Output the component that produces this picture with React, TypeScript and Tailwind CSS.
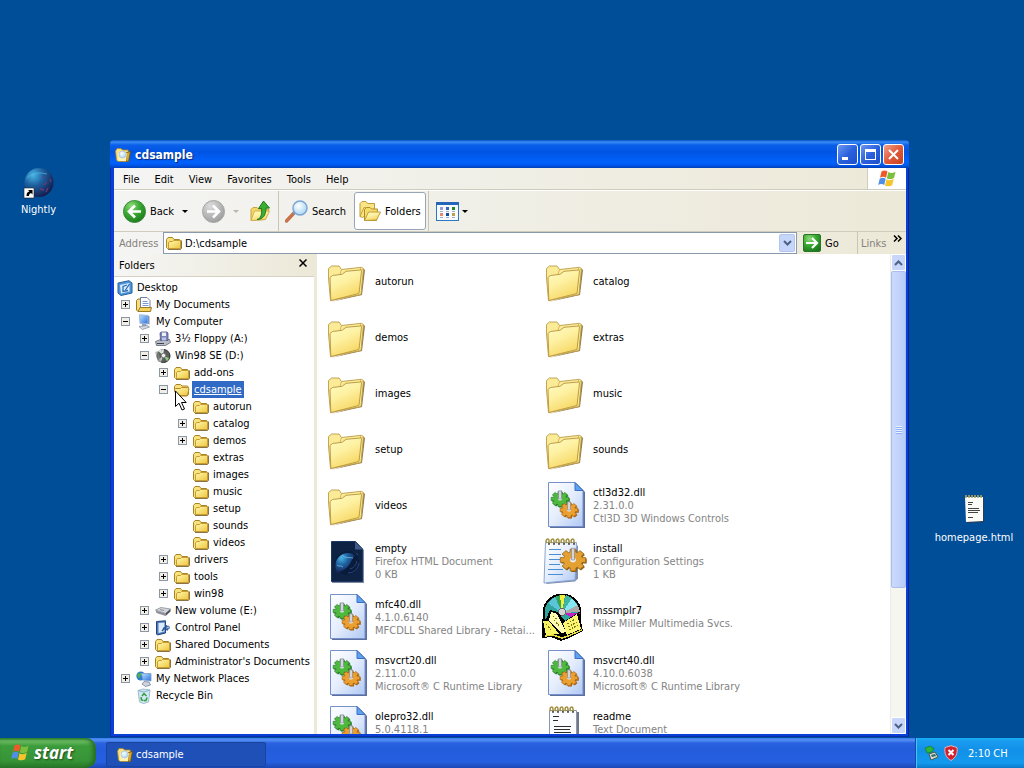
import type { ReactNode } from "react";
import clsx from "clsx";

type TreeNode = {
  label: string;
  icon: ReactNode;
  expandable?: boolean;
  selected?: boolean;
  children?: TreeNode[];
};

type FileItem = {
  name: string;
  icon: ReactNode;
  details?: string[];
};

// Gradients shared by every icon on the page
function Gradients() {
  return (
    <svg className="absolute w-0 h-0" aria-hidden="true">
      <defs>
        <linearGradient id="folder" x1="0" y1="0" x2="0.5" y2="1">
          <stop offset="0" stopColor="#fffcc4" />
          <stop offset="0.5" stopColor="#fdf0a0" />
          <stop offset="1" stopColor="#f7d764" />
        </linearGradient>
        <linearGradient id="folderSmall" x1="0" y1="0" x2="1" y2="1">
          <stop offset="0" stopColor="#fff9b0" />
          <stop offset="1" stopColor="#efc53c" />
        </linearGradient>
        <linearGradient id="page" x1="0" y1="0" x2="1" y2="1">
          <stop offset="0" stopColor="#ffffff" />
          <stop offset="0.5" stopColor="#e4edfd" />
          <stop offset="1" stopColor="#b0c8f4" />
        </linearGradient>
        <radialGradient id="green" cx="0.35" cy="0.25" r="0.8">
          <stop offset="0" stopColor="#8fdc7a" />
          <stop offset="0.5" stopColor="#3aa832" />
          <stop offset="1" stopColor="#1c7a1c" />
        </radialGradient>
        <radialGradient id="grey" cx="0.35" cy="0.25" r="0.8">
          <stop offset="0" stopColor="#dcdcdc" />
          <stop offset="1" stopColor="#9c9c9c" />
        </radialGradient>
        <radialGradient id="globe" cx="0.3" cy="0.25" r="0.8">
          <stop offset="0" stopColor="#48b4e4" />
          <stop offset="0.45" stopColor="#1d5f9e" />
          <stop offset="1" stopColor="#151c4c" />
        </radialGradient>
        <linearGradient id="screen" x1="0" y1="0" x2="1" y2="1">
          <stop offset="0" stopColor="#b8e4ff" />
          <stop offset="1" stopColor="#2a6fe0" />
        </linearGradient>
        <radialGradient id="lens" cx="0.4" cy="0.35" r="0.7">
          <stop offset="0" stopColor="#ffffff" />
          <stop offset="1" stopColor="#a5d3f5" />
        </radialGradient>
      </defs>
    </svg>
  );
}

function FolderSmall() {
  return (
    <svg className="size-4 shrink-0" viewBox="0 0 16 16">
      <path d="M2 14.500h12.500l1-1V5.500" fill="none" stroke="#8a7344" />
      <path
        d="M.5 12.500V4.500L2 2.500h4.500L8 4.500h5.500l1 1v8h-13z"
        fill="#f8e27c"
        stroke="#a98426"
      />
      <path
        d="M2.500 13.500V8l1-1.500h3l1-1h6.500l.5.500v7.500z"
        fill="url(#folderSmall)"
        stroke="#c79d33"
      />
    </svg>
  );
}

function FolderOpenSmall() {
  return (
    <svg className="size-4 shrink-0" viewBox="0 0 16 16">
      <path
        d="M.5 9V4.500L2 2.500h4.500L8 4h5.500l1 1.500v7L13 14H3z"
        fill="#f8e27c"
        stroke="#a98426"
      />
      <path
        d="M3 13.500L.6 7.500 1.500 6.500h5l1-1h6l1.500 1L13.500 13.500z"
        fill="url(#folderSmall)"
        stroke="#b48a2b"
      />
    </svg>
  );
}

// Folder with a magnifier, used by the title bar and the task button
function FolderSearch() {
  return (
    <svg className="size-4 shrink-0" viewBox="0 0 16 16">
      <path
        d="M.5 4L2 1.500h4L7.500 3h5.500l.5 1v10.500H3L1.500 13z"
        fill="#f8e184"
        stroke="#a9842c"
        strokeWidth=".8"
      />
      <path d="M11.500 5.500l4-1-2 10-2.500-.500z" fill="#d9a92f" stroke="#6b4c14" strokeWidth=".8" />
      <path d="M3 6h9l-1 8H3.500z" fill="#fff3b4" />
      <circle cx="7.500" cy="7.500" r="3.500" fill="url(#lens)" stroke="#a9c6de" strokeWidth=".8" />
    </svg>
  );
}

function FolderLarge() {
  return (
    <svg className="size-12 shrink-0" viewBox="0 0 48 48">
      <path d="M6.500 45l31.500-7 3-25-1.500-1.500L36 37z" fill="#8f7a48" />
      <path
        d="M4.500 21V11.500l3-2.500h7.500l2.500 3.500 20-2.200 2 1.200-2.500 26-30.500 6z"
        fill="#fbeb96"
        stroke="#bb9c48"
        strokeWidth=".9"
      />
      <path
        d="M17.500 12.500l-1.500 4.500M36.500 10.500v2.500M36.500 13l2.500-.500"
        fill="none"
        stroke="#c9ac56"
        strokeWidth=".8"
      />
      <path
        d="M6 20.500l2.500-2 9.500-1.200 4-3L36.500 13l1 1-2.500 22.500L6.800 43.500z"
        fill="url(#folder)"
        stroke="#b5943c"
        strokeWidth=".9"
      />
    </svg>
  );
}

// Closed outline of a cog with eight square teeth, centred on 0,0
function cogPath(radius: number) {
  const teeth = 8;
  const points: string[] = [];
  for (let i = 0; i < teeth; i++) {
    const angle = (i / teeth) * Math.PI * 2;
    [
      [-0.22, 1],
      [0.22, 1],
      [0.3, 0.74],
      [0.48, 0.74],
    ].forEach(([offset, reach]) => {
      const a = angle + offset;
      points.push(
        `${(Math.cos(a) * radius * reach).toFixed(1)} ${(Math.sin(a) * radius * reach * 0.86).toFixed(1)}`,
      );
    });
  }
  return `M${points.join("L")}z`;
}

type CogProps = { x: number; y: number; radius: number; fill: string; stroke: string };

function Cog({ x, y, radius, fill, stroke }: CogProps) {
  return (
    <g transform={`translate(${x} ${y})`}>
      <path d={cogPath(radius)} transform="translate(1 1)" fill={stroke} />
      <path d={cogPath(radius)} fill={fill} stroke={stroke} strokeWidth=".7" />
      <ellipse rx={radius * 0.22} ry={radius * 0.18} fill="#eef1f8" />
      <path
        d={`M-1.500 0V${-radius * 0.9}h3V0z`}
        fill="#d3d6de"
        stroke="#7e828e"
        strokeWidth=".6"
      />
    </g>
  );
}

function DllIcon() {
  return (
    <svg className="size-12 shrink-0" viewBox="0 0 48 48">
      <path d="M8 3h27l8 8v36H8z" fill="#5d6f9f" />
      <path d="M6.500 1.500h26.500l8 8V45.500h-34.500z" fill="url(#page)" stroke="#7590cc" />
      <path d="M33 1.500v8h8z" fill="#5da2ee" stroke="#3c6fc0" />
      <Cog x={18} y={18} radius={9} fill="#4fb83f" stroke="#2b7d28" />
      <Cog x={27} y={29} radius={9} fill="#eb9f2f" stroke="#a86612" />
    </svg>
  );
}

function HtmlFileIcon() {
  return (
    <svg className="size-12 shrink-0" viewBox="0 0 48 48">
      <path d="M8 5h24l8 8v33H8z" fill="#7f8aa0" />
      <path d="M7.500 4.500H31.500l7 7.500v32.500H7.500z" fill="#0e2344" stroke="#1b3763" />
      <path d="M31 4.500v8h8z" fill="#3f5a88" />
      <circle cx="23" cy="26" r="12" fill="#0b1b3c" />
      <path
        d="M13 36c-4-9 0-19 10-20 4-.5 7 1 8 3-3 2-3 5-6 9-3 4-7 6-12 8z"
        fill="url(#globe)"
      />
      <path d="M13 28c2 2 4 0 6 2M18 18c4 4 7 2 11 3" stroke="#7cd0f0" strokeWidth=".7" fill="none" />
      <path d="M24 36c6 0 10-4 11-10M26 32c4-1 6-4 7-8M32 16l2 2" stroke="#27467c" fill="none" />
    </svg>
  );
}

function Spiral({ count }: { count: number }) {
  return (
    <>
      {Array.from({ length: count }, (_, i) => (
        <g key={i} transform={`translate(${i * 5} 0)`}>
          <path d="M5 6c-3-3 2-6 2-2v3" fill="none" stroke="#a18f3e" strokeWidth="1.500" />
          <circle cx="7" cy="7" r=".9" fill="#3c3c3c" />
        </g>
      ))}
    </>
  );
}

function ConfigIcon() {
  return (
    <svg className="size-12 shrink-0" viewBox="0 0 48 48">
      <path d="M4 47l29-2.500 3-3V8z" fill="#7e8cae" />
      <path d="M3.500 5.500h31l-1.500 37.500-31 3z" fill="url(#page)" stroke="#8aa6d2" />
      <path
        d="M7 12.500h12M7 17.500h12M7 22.500h11M7 27.500h11M6 32.500h15M6 37.500h15"
        stroke="#4b8fcf"
      />
      <Spiral count={6} />
      <Cog x={31} y={23} radius={13} fill="#e4a030" stroke="#8f5f14" />
    </svg>
  );
}

function NotepadIcon() {
  return (
    <svg className="size-12 shrink-0" viewBox="0 0 48 48">
      <path d="M9 7h28v41H9z" fill="#6f7688" />
      <path d="M7.500 5.500h27v42h-27z" fill="#fbfcff" stroke="#8d97ac" />
      <path
        d="M11 11.500h6M11 15.500h5M12 21.500h17M12 24.500h16M12 27.500h17M12 34.500h8"
        stroke="#2b2b2b"
        strokeWidth="1.200"
      />
      <g transform="translate(4 0)">
        <Spiral count={5} />
      </g>
    </svg>
  );
}

// Pixel-art disc behind an open book
function SamplerIcon() {
  return (
    <svg className="size-12 shrink-0" viewBox="0 0 48 48" shapeRendering="crispEdges">
      <circle cx="20" cy="20" r="18.500" fill="#2fa59e" stroke="#000" strokeWidth="2" />
      <path d="M20 20L6 10l7-6z" fill="#5cc4d8" />
      <path d="M20 20L14 4l4-2z" fill="#37a54c" />
      <path d="M20 20L18 2h5z" fill="#f3f03a" />
      <path d="M20 20L24 2l6 3z" fill="#3fb5a2" />
      <path d="M20 20L30 5l6 8z" fill="#86e6f2" />
      <path d="M20 20l16-8 2 7z" fill="#a9a9a9" />
      <path d="M20 20l18 0-1 7z" fill="#c11fc6" />
      <circle cx="20" cy="19" r="3.500" fill="#d5d5d5" stroke="#666" />
      <path d="M0 26h4l4-9 8 2 7 9 14-9 4 19-14 7-8 3-10-4-9 1z" fill="#000" />
      <path d="M1 28l6 0 10 13-13 1z" fill="#f7f264" />
      <path d="M9 19l6 2 9 18-5 1L7 27z" fill="#fffdb0" />
      <path d="M21 30l14-9 4 15-14 6z" fill="#fbf672" />
      <path
        d="M25 31l8-5M26 34l9-5M27 37l9-5M11 23l5 4M12 27l6 7M4 31l5 6"
        stroke="#7a7714"
        strokeDasharray="2 1"
      />
      <path d="M3 43l8-1 9 3 6-2 14-6" fill="none" stroke="#e5dc3a" strokeWidth="1.500" />
    </svg>
  );
}

function WindowsFlag({ className }: { className: string }) {
  return (
    <svg className={className} viewBox="0 0 20 20">
      <path d="M4.500 2.500c2-1.300 4-1.300 6 0L9 8.700c-2-1.300-4-1.300-6 0z" fill="#ec5a2a" />
      <path d="M11.300 3c2 1.300 4.500 1.300 7.200-.300L17 9c-2.500 1.500-5 1.500-7.200.200z" fill="#7cbf3a" />
      <path d="M2.700 9.700c2-1.300 4-1.300 6 0l-1.500 6.200c-2-1.300-4-1.300-6 0z" fill="#4f8fe8" />
      <path d="M9.500 10.200c2 1.300 4.700 1.300 7.200-.200l-1.500 6.200c-2.500 1.500-5 1.500-7.200.200z" fill="#f8c42c" />
    </svg>
  );
}

function DesktopIcon() {
  return (
    <svg className="size-4 shrink-0" viewBox="0 0 16 16">
      <path d="M1 3L12 .700 15 3v10L4 15.500 1 13z" fill="#4f93d8" stroke="#24619f" />
      <path d="M3 5l9.500-2v8.500L4 13.500z" fill="#d9edff" />
      <path d="M10 5L6 6.500v5l5-1M8.500 10l4-6" fill="none" stroke="#2d6cb0" strokeWidth="1.300" />
    </svg>
  );
}

function DocumentsIcon() {
  return (
    <svg className="size-4 shrink-0" viewBox="0 0 16 16">
      <path d="M.5 13V3.500L2 2h3l1 1.500V14.500H2z" fill="#f7de7a" stroke="#9c7b26" />
      <path d="M4.500.500h6.500L14 3.500v9H4.500z" fill="#fdfdff" stroke="#6d7fa6" />
      <path d="M6.500 4.500h5M6.500 6.500h6M6.500 8.500h6" stroke="#7b9bd0" />
      <path d="M2 14.500L4 10.500h11.500l-1 4z" fill="#f3d25c" stroke="#9c7b26" />
    </svg>
  );
}

function ComputerIcon() {
  return (
    <svg className="size-4 shrink-0" viewBox="0 0 16 16">
      <path d="M3.500.800l8.500.700v8.500l-8-.800z" fill="url(#screen)" stroke="#9db4dc" />
      <path d="M12 1.500l1.500 1v8L12 10z" fill="#8093bd" />
      <path d="M6 9.500l4 .500v2H6z" fill="#9aa4bb" />
      <path d="M3 12.500l8-1 2.500 1.500-7 2.500z" fill="#d4d9e4" stroke="#7b8396" strokeWidth=".7" />
    </svg>
  );
}

function FloppyIcon() {
  return (
    <svg className="size-4 shrink-0" viewBox="0 0 16 16">
      <path d="M.5 10.500l5-2h9l1 3-5 3H1.500z" fill="#b9bcc6" stroke="#62656f" strokeWidth=".8" />
      <path d="M5 2l1.500-1H12l1 1v7.500H5.500z" fill="#7b86b4" stroke="#4d5684" strokeWidth=".8" />
      <path d="M7 1.500h4v3.500H7z" fill="#eef0f8" />
      <path d="M7 6.500h4v3H7z" fill="#b9c4e6" />
      <path d="M2 12.500h7" stroke="#3f434e" />
    </svg>
  );
}

function DiscIcon() {
  return (
    <svg className="size-4 shrink-0" viewBox="0 0 16 16">
      <ellipse cx="8.500" cy="8" rx="6.500" ry="6.500" fill="#5c605c" stroke="#2b2b2b" />
      <path d="M8 7L3 3l3-1.500z" fill="#d9ead9" />
      <path d="M9 8l5 2-2 3.500z" fill="#8fca86" />
      <path d="M8 8l-2 6-3-2z" fill="#c4c8cc" />
      <path d="M8 7L6 1.500l3-.3z" fill="#e8e8f4" />
      <circle cx="8.500" cy="7.500" r="2.200" fill="#f3f3f3" stroke="#777" />
      <path d="M0 4l3-1 3 10-3 1z" fill="#8d948f" opacity=".6" />
    </svg>
  );
}

function DriveIcon() {
  return (
    <svg className="size-4 shrink-0" viewBox="0 0 16 16">
      <path d="M.5 7L6 4.500l9.500 1.500-5 4.500z" fill="#d3d5da" stroke="#8b8e97" strokeWidth=".8" />
      <path d="M.5 7.500l10 3v2.500l-9-3z" fill="#8e9199" />
      <path d="M10.500 10.500l5-4.500v2.500l-5 4.500z" fill="#4d5057" />
      <path d="M5 6.500l4 1" stroke="#8e9199" />
    </svg>
  );
}

function ControlPanelIcon() {
  return (
    <svg className="size-4 shrink-0" viewBox="0 0 16 16">
      <path d="M1.500 1.500l9-.700v12.200l-8 2-1-1z" fill="#4b79b9" stroke="#21457c" />
      <path d="M3.500 3l6-.500v9l-6 1.500z" fill="#dcebfb" />
      <path d="M7 11l5-5.500M10 5l4 3.500M8 8l5 2" stroke="#2a5698" strokeWidth="1.400" />
      <circle cx="13" cy="7.500" r="1.500" fill="#8fb4e4" stroke="#21457c" strokeWidth=".6" />
    </svg>
  );
}

function NetworkIcon() {
  return (
    <svg className="size-4 shrink-0" viewBox="0 0 16 16">
      <circle cx="4.800" cy="5" r="4.500" fill="#2f7fd0" />
      <path d="M1 4c2-3 5-2 5-1s-2 1-2 3-2 1-3-2z" fill="#4fb04a" />
      <path d="M5.500 2.500h9.500v7.500l-8-1z" fill="url(#screen)" stroke="#7c9ccc" strokeWidth=".8" />
      <path d="M8 10.500l5 .500 1.500 3-5 1.500L6 13z" fill="#cdd3df" stroke="#7a8294" strokeWidth=".8" />
    </svg>
  );
}

function RecycleIcon() {
  return (
    <svg className="size-4 shrink-0" viewBox="0 0 16 16">
      <path d="M2 2.500l5-1.500 7 1-1.500 12-5 1.500-4-1.500z" fill="#d0e7f4" stroke="#8cb0c4" strokeWidth=".8" />
      <path d="M2 2.500l6 1.500 6-2" fill="none" stroke="#8cb0c4" />
      <path d="M6 8l2-2.500L10.500 8M11 9.500l-1 3H8M5 9l.500 3 2 .500" stroke="#2f9d3a" strokeWidth="1.500" fill="none" />
    </svg>
  );
}

const tree: TreeNode[] = [
  { label: "My Documents", icon: <DocumentsIcon />, expandable: true },
  {
    label: "My Computer",
    icon: <ComputerIcon />,
    expandable: true,
    children: [
      { label: "3½ Floppy (A:)", icon: <FloppyIcon />, expandable: true },
      {
        label: "Win98 SE (D:)",
        icon: <DiscIcon />,
        expandable: true,
        children: [
          { label: "add-ons", icon: <FolderSmall />, expandable: true },
          {
            label: "cdsample",
            icon: <FolderOpenSmall />,
            expandable: true,
            selected: true,
            children: [
              { label: "autorun", icon: <FolderSmall /> },
              { label: "catalog", icon: <FolderSmall />, expandable: true },
              { label: "demos", icon: <FolderSmall />, expandable: true },
              { label: "extras", icon: <FolderSmall /> },
              { label: "images", icon: <FolderSmall /> },
              { label: "music", icon: <FolderSmall /> },
              { label: "setup", icon: <FolderSmall /> },
              { label: "sounds", icon: <FolderSmall /> },
              { label: "videos", icon: <FolderSmall /> },
            ],
          },
          { label: "drivers", icon: <FolderSmall />, expandable: true },
          { label: "tools", icon: <FolderSmall />, expandable: true },
          { label: "win98", icon: <FolderSmall />, expandable: true },
        ],
      },
      { label: "New volume (E:)", icon: <DriveIcon />, expandable: true },
      { label: "Control Panel", icon: <ControlPanelIcon />, expandable: true },
      { label: "Shared Documents", icon: <FolderSmall />, expandable: true },
      { label: "Administrator's Documents", icon: <FolderSmall />, expandable: true },
    ],
  },
  { label: "My Network Places", icon: <NetworkIcon />, expandable: true },
  { label: "Recycle Bin", icon: <RecycleIcon /> },
];

const files: FileItem[] = [
  { name: "autorun", icon: <FolderLarge /> },
  { name: "catalog", icon: <FolderLarge /> },
  { name: "demos", icon: <FolderLarge /> },
  { name: "extras", icon: <FolderLarge /> },
  { name: "images", icon: <FolderLarge /> },
  { name: "music", icon: <FolderLarge /> },
  { name: "setup", icon: <FolderLarge /> },
  { name: "sounds", icon: <FolderLarge /> },
  { name: "videos", icon: <FolderLarge /> },
  { name: "ctl3d32.dll", icon: <DllIcon />, details: ["2.31.0.0", "Ctl3D 3D Windows Controls"] },
  { name: "empty", icon: <HtmlFileIcon />, details: ["Firefox HTML Document", "0 KB"] },
  { name: "install", icon: <ConfigIcon />, details: ["Configuration Settings", "1 KB"] },
  {
    name: "mfc40.dll",
    icon: <DllIcon />,
    details: ["4.1.0.6140", "MFCDLL Shared Library - Retai..."],
  },
  { name: "mssmplr7", icon: <SamplerIcon />, details: ["Mike Miller Multimedia Svcs."] },
  { name: "msvcrt20.dll", icon: <DllIcon />, details: ["2.11.0.0", "Microsoft® C Runtime Library"] },
  { name: "msvcrt40.dll", icon: <DllIcon />, details: ["4.10.0.6038", "Microsoft® C Runtime Library"] },
  { name: "olepro32.dll", icon: <DllIcon />, details: ["5.0.4118.1", ""] },
  { name: "readme", icon: <NotepadIcon />, details: ["Text Document", ""] },
];

const menus = ["File", "Edit", "View", "Favorites", "Tools", "Help"];

function TreeItem({ node }: { node: TreeNode }) {
  return (
    <li>
      <div className="flex items-center h-[17px]">
        {node.expandable ? (
          <button
            aria-label={`Toggle ${node.label}`}
            className="size-[9px] shrink-0 border border-[#8c97a4] bg-[#f0eee6] flex items-center justify-center"
          >
            <svg className="size-[7px]" viewBox="0 0 7 7" shapeRendering="crispEdges">
              <path d={node.children ? "M1 3.500h5" : "M1 3.500h5M3.500 1v5"} stroke="#000" />
            </svg>
          </button>
        ) : (
          <span className="w-[9px] shrink-0" />
        )}
        <span className="ml-1.5 mr-0.5 flex">{node.icon}</span>
        <a
          href="#"
          className={clsx(
            "px-0.5 leading-[17px] whitespace-nowrap",
            node.selected && "bg-[#316ac5] text-white underline",
          )}
        >
          {node.label}
        </a>
      </div>
      {node.children && (
        <ul className="pl-[19px]">
          {node.children.map((child) => (
            <TreeItem key={child.label} node={child} />
          ))}
        </ul>
      )}
    </li>
  );
}

function Chevron({ up }: { up?: boolean }) {
  return (
    <svg className="w-[9px] h-1.5" viewBox="0 0 9 6">
      <path
        d={up ? "M1 5l3.500-3.500L8 5" : "M1 1l3.500 3.500L8 1"}
        fill="none"
        stroke="#4d6185"
        strokeWidth="2"
      />
    </svg>
  );
}

function Caret({ className }: { className?: string }) {
  return (
    <svg className={clsx("w-1.5 h-[3px] shrink-0", className)} viewBox="0 0 6 3">
      <path d="M0 0h6L3 3z" fill="currentColor" />
    </svg>
  );
}

function Separator() {
  return <span className="w-px self-stretch bg-[#c9c6b5]" />;
}

function TitleBar() {
  const button =
    "size-[21px] rounded-[3px] border border-white flex items-center justify-center";
  return (
    <header className="h-7 shrink-0 flex items-center px-[5px] pt-px rounded-t-[4px] bg-[linear-gradient(#0b50c8_0px,#3a8df5_2px,#0a5fea_5px,#0054e3_12px,#0062fc_22px,#0058ee_25px,#0040b8_28px)]">
      <FolderSearch />
      <h1 className="ml-1 pt-px flex-1 text-white text-[12px] font-bold [text-shadow:1px_1px_1px_#0a2a7c]">
        cdsample
      </h1>
      <div className="flex gap-0.5">
        <button
          aria-label="Minimize"
          className={clsx(button, "bg-linear-to-br from-[#6c97f0] via-[#2b61dd] to-[#1d4ecb]")}
        >
          <svg className="size-[15px]" viewBox="0 0 15 15">
            <path d="M2 10h6v3H2z" fill="#fff" />
          </svg>
        </button>
        <button
          aria-label="Maximize"
          className={clsx(button, "bg-linear-to-br from-[#6c97f0] via-[#2b61dd] to-[#1d4ecb]")}
        >
          <svg className="size-[15px]" viewBox="0 0 15 15" shapeRendering="crispEdges">
            <path d="M2 2h11v11H2zM3 5v7h9V5z" fill="#fff" fillRule="evenodd" />
          </svg>
        </button>
        <button
          aria-label="Close"
          className={clsx(button, "bg-linear-to-br from-[#f0a088] via-[#e05a3a] to-[#c8401c]")}
        >
          <svg className="size-[15px]" viewBox="0 0 15 15">
            <path d="M3 3l9 9M12 3l-9 9" stroke="#fff" strokeWidth="2" />
          </svg>
        </button>
      </div>
    </header>
  );
}

function MenuBar() {
  return (
    <nav className="h-[22px] flex items-stretch border-b border-[#cfccbd]">
      <div className="flex-1 flex items-center gap-[15px] pl-[9px] pt-px">
        {menus.map((menu) => (
          <button key={menu}>{menu}</button>
        ))}
      </div>
      <div className="w-[39px] bg-white border-l border-[#cfccbd] flex items-center justify-center">
        <WindowsFlag className="size-5" />
      </div>
    </nav>
  );
}

function Toolbar() {
  return (
    <div className="h-[42px] flex items-center pl-[9px] border-t border-t-white border-b border-[#cfccbd]">
      <button className="flex items-center gap-1">
        <svg className="size-[23px]" viewBox="0 0 23 23">
          <circle cx="11.500" cy="11.500" r="11" fill="url(#green)" stroke="#3b8a36" />
          <path d="M18 11.500H7M12 5.500l-6 6 6 6" fill="none" stroke="#fff" strokeWidth="2.600" />
        </svg>
        Back
      </button>
      <button aria-label="Back history" className="ml-1.5 p-0.5">
        <Caret />
      </button>
      <button aria-label="Forward" className="ml-3">
        <svg className="size-[23px]" viewBox="0 0 23 23">
          <circle cx="11.500" cy="11.500" r="11" fill="url(#grey)" stroke="#a6a6a6" />
          <path d="M5 11.500h11M11 5.500l6 6-6 6" fill="none" stroke="#fff" strokeWidth="2.600" />
        </svg>
      </button>
      <button aria-label="Forward history" className="ml-1.5 p-0.5">
        <Caret className="text-[#b9b7ab]" />
      </button>
      <button aria-label="Up" className="ml-2 mr-[7px]">
        <svg className="size-[22px]" viewBox="0 0 22 22">
          <path d="M2 20.500V9.500l2-2h4l1.500 1.500h10.500l-4 10.500z" fill="#f3d760" stroke="#c4a544" />
          <path d="M2 20.500l3.500-9.500h15l-4 8.500z" fill="url(#folder)" stroke="#d0b050" />
          <path
            d="M8 19.500c4-1 5-5 4.500-11H9.500L14.500 1l6 7h-3.500c0 7-3 11.500-9 11.500z"
            fill="#3bad33"
            stroke="#1f7a1c"
          />
        </svg>
      </button>
      <Separator />
      <button className="flex items-center gap-1 pl-1.5 pr-2">
        <svg className="size-[23px]" viewBox="0 0 23 23">
          <path d="M1.500 21L9 13" stroke="#c9734a" strokeWidth="3.500" strokeLinecap="round" />
          <path d="M8 14l2-2" stroke="#7c93ad" strokeWidth="2.500" />
          <circle cx="15" cy="8" r="7" fill="url(#lens)" stroke="#7ba5d6" strokeWidth="1.500" />
        </svg>
        Search
      </button>
      <button
        aria-pressed="true"
        className="h-[38px] flex items-center gap-1 px-1 bg-white border border-[#98a5b8] rounded-[3px]"
      >
        <svg className="size-[22px]" viewBox="0 0 22 22">
          <path d="M1 16.500V3.500l2-2h4l1.500 2h7v5l-12 9z" fill="#f9e583" stroke="#c09c38" />
          <path d="M5.500 20.500V9.500l2-2h3.500l1.500 1.500h6l-1 11.500z" fill="#f6dc6a" stroke="#b08c28" />
          <path d="M5.500 20.500L9.500 12h12l-4 8z" fill="url(#folder)" stroke="#c09c38" />
          <path d="M1 16.500L5 7.500h3" fill="none" stroke="#c7a33c" />
        </svg>
        Folders
      </button>
      <span className="w-0.5" />
      <Separator />
      <button aria-label="Views" className="flex items-center gap-[3px] ml-[7px]">
        <svg className="w-[23px] h-[19px]" viewBox="0 0 23 19" shapeRendering="crispEdges">
          <rect x=".5" y=".5" width="22" height="18" fill="#f7fbff" stroke="#2a77c4" />
          <path d="M0 0h23v3H0z" fill="#2467b8" />
          <path d="M4 5h3v3H4z" fill="#9b9bd8" />
          <path d="M10 5h3v3h-3z" fill="#3a62c0" />
          <path d="M16 5h3v3h-3z" fill="#1d8a26" />
          <path d="M4 11h3v3H4z" fill="#e58a72" />
          <path d="M10 11h3v3h-3z" fill="#134d96" />
          <path d="M16 11h3v3h-3z" fill="#b5a548" />
          <path d="M4 9.500h3M10 9.500h3M16 9.500h3M4 15.500h3M10 15.500h3M16 15.500h3" stroke="#9fb0c8" />
        </svg>
        <Caret />
      </button>
    </div>
  );
}

function AddressBar() {
  return (
    <div className="h-[22px] flex items-center pl-[5px]">
      <label htmlFor="address" className="w-11 shrink-0 text-[#84827a]">
        Address
      </label>
      <div className="flex-1 h-[22px] flex items-center bg-white border border-[#8a9aac] pl-0.5">
        <FolderSmall />
        <input
          id="address"
          defaultValue={"D:\\cdsample"}
          className="flex-1 min-w-0 ml-[3px] h-full pt-px outline-none"
        />
        <button
          aria-label="Show addresses"
          className="w-4 h-[18px] mr-px rounded-[2px] bg-[#c6d6fb] border border-[#b3c5ef] flex items-center justify-center"
        >
          <Chevron />
        </button>
      </div>
      <button className="flex items-center gap-1 ml-1.5 w-[54px]">
        <svg className="size-[18px]" viewBox="0 0 18 18">
          <rect x=".5" y=".5" width="17" height="17" rx="1.500" fill="url(#green)" stroke="#27762a" />
          <path d="M3 9h10M9 4l5 5-5 5" fill="none" stroke="#fff" strokeWidth="2.200" />
        </svg>
        Go
      </button>
      <Separator />
      <span className="ml-[3px] w-8 text-[#84827a]">Links</span>
      <button aria-label="More links" className="w-[13px] self-start">
        <svg className="w-[9px] h-[7px] mt-[3px]" viewBox="0 0 9 7">
          <path d="M1 .500l3 3-3 3M5 .500l3 3-3 3" fill="none" stroke="#000" strokeWidth="1.500" />
        </svg>
      </button>
    </div>
  );
}

function FolderTree() {
  return (
    <aside className="w-[203px] shrink-0 flex flex-col bg-[#ece9d8] pr-[3px]">
      <div className="h-[23px] shrink-0 flex items-center justify-between pl-[5px] pr-[7px] border-b border-[#d5d2c4] bg-linear-to-r from-[#f5f5f4] to-[#ece9d8]">
        <h2 className="pt-px">Folders</h2>
        <button aria-label="Close folders" className="self-start pt-[5px]">
          <svg className="size-2" viewBox="0 0 8 8">
            <path d="M.500.500l7 7M7.500.500l-7 7" stroke="#000" strokeWidth="1.500" />
          </svg>
        </button>
      </div>
      <div className="flex-1 bg-white pt-0.5">
        <div className="flex items-center h-[17px] pl-[3px]">
          <DesktopIcon />
          <a href="#" className="ml-0.5 px-0.5">
            Desktop
          </a>
        </div>
        <ul className="pl-[7px]">
          {tree.map((node) => (
            <TreeItem key={node.label} node={node} />
          ))}
        </ul>
      </div>
    </aside>
  );
}

function FileGrid() {
  return (
    <ul className="flex-1 min-w-0 overflow-hidden bg-white grid grid-cols-[repeat(auto-fill,218px)] auto-rows-[48px] gap-y-2 pl-[7px] pt-[3px]">
      {files.map((file) => (
        <li key={file.name} className="flex items-center leading-[13px]">
          {file.icon}
          <div className="ml-[3px] whitespace-nowrap">
            <p>{file.name}</p>
            {file.details?.map((line, i) => (
              <p key={i} className="text-[#848484] min-h-[13px]">
                {line}
              </p>
            ))}
          </div>
        </li>
      ))}
    </ul>
  );
}

function ScrollBar() {
  const arrow =
    "h-[17px] shrink-0 rounded-[2px] border border-white bg-[#c8d6fb] flex items-center justify-center";
  return (
    <div className="w-4 shrink-0 flex flex-col bg-[#f6f6f1] border-l border-[#eeede5]">
      <button aria-label="Scroll up" className={arrow}>
        <Chevron up />
      </button>
      <div className="flex-[71] rounded-[2px] border border-[#a9bdf0] bg-linear-to-r from-[#cbdafd] to-[#b9cbf8] flex items-center justify-center">
        <span className="w-1.5 h-2 bg-[repeating-linear-gradient(#eef4fe_0px,#eef4fe_1px,#8cb0f8_1px,#8cb0f8_2px)]" />
      </div>
      <div className="flex-[29]" />
      <button aria-label="Scroll down" className={arrow}>
        <Chevron />
      </button>
    </div>
  );
}

function ExplorerWindow() {
  return (
    <section className="absolute left-[110px] right-[115px] top-[140px] bottom-px flex flex-col rounded-t-[5px] bg-[#0a3fd6] shadow-[inset_1px_-1px_#0a2cb0,inset_-1px_0_#0a1f9c]">
      <TitleBar />
      <div className="flex-1 min-h-0 flex flex-col ml-1 mr-[3px] mb-[3px] bg-white">
        <div className="shrink-0 bg-linear-to-r from-[#f4f4f3] to-[#ece9d8]">
          <MenuBar />
          <Toolbar />
          <AddressBar />
        </div>
        <div className="flex-1 min-h-0 flex overflow-hidden">
          <FolderTree />
          <FileGrid />
          <ScrollBar />
        </div>
      </div>
    </section>
  );
}

function Taskbar() {
  return (
    <footer className="h-[30px] shrink-0 flex items-stretch text-white bg-[linear-gradient(#3a7cf0_0px,#5590f5_2px,#2a63e0_5px,#245cdb_10px,#2560e0_24px,#1b47b5_30px)]">
      <button className="w-24 flex items-center pl-2.5 gap-1 rounded-r-[10px] bg-[linear-gradient(#2f8a2f_0px,#6cbc63_3px,#3c9c3b_8px,#379537_22px,#287a2a_30px)] shadow-[inset_-3px_0_4px_#246c26]">
        <WindowsFlag className="size-5" />
        <span className="font-['Open_Sans'] text-[17px] leading-5 font-bold italic [text-shadow:1px_1px_2px_#1b4a1b]">
          start
        </span>
      </button>
      <button className="ml-2.5 mt-1 mb-px w-40 flex items-center gap-[3px] pl-2.5 rounded-[2px] bg-[#1e50b8] border border-[#1a459f]">
        <FolderSearch />
        cdsample
      </button>
      <div className="ml-auto w-[109px] flex items-center pl-2 border-l border-[#0b4fa8] bg-[linear-gradient(#18b0f5_0px,#1a9cf0_3px,#1290e9_12px,#139aee_25px,#0c78c8_30px)] shadow-[inset_1px_0_#4cc4fa]">
        <svg className="size-4" viewBox="0 0 16 16">
          <path d="M1 3l6-2 1 2 2 0-2 4-5 1z" fill="#2fb53a" stroke="#167a22" strokeWidth=".7" />
          <path d="M5 9l6-2 3 5-7 3z" fill="#d6dbd0" stroke="#4b5a52" />
          <path d="M7 10l4-1 1 2-4 1z" fill="#2b6b62" />
        </svg>
        <svg className="size-4 ml-[3px]" viewBox="0 0 16 16">
          <path d="M8 .700l6 1.800c.800 6-1 10-6 13C3 12.500 1.200 8.500 2 2.500z" fill="#d3202f" stroke="#e8b4b8" />
          <path d="M5.500 5l5 5M10.500 5l-5 5" stroke="#fff" strokeWidth="2" />
        </svg>
        <time className="ml-[9px]">2:10 CH</time>
      </div>
    </footer>
  );
}

export default function App() {
  return (
    <div className="h-screen flex flex-col overflow-hidden bg-[#004e98] font-['DejaVu_Sans_Condensed','DejaVu_Sans',sans-serif] text-[11px] leading-[13px] text-black">
      <Gradients />
      <main className="relative flex-1 min-h-0">
        <button className="absolute left-2 top-[167px] w-[61px] flex flex-col items-center gap-1 text-white">
          <svg className="size-8" viewBox="0 0 32 32">
            <circle cx="16" cy="15.500" r="14.500" fill="url(#globe)" />
            <path d="M20 10l3 1M24 15l-3 3M17 22l4 1M25 21l-2 4M27 12l1 3" stroke="#6a3a78" strokeWidth="1.300" />
            <path d="M4 11c5-5 12-6 20-4" stroke="#5cc0ea" strokeWidth=".6" fill="none" />
            <path d="M1 21h10v10H1z" fill="#fff" stroke="#222" strokeWidth=".6" />
            <path d="M3.500 29c0-3 1-4 3-4.500L5 23h4.500v4.500L8 26c-1.500.500-2 1.500-2 3z" fill="#000" />
          </svg>
          Nightly
        </button>
        <button className="absolute right-2 top-[493px] w-[84px] flex flex-col items-center gap-1.5 text-white">
          <svg className="size-8" viewBox="0 0 32 32">
            <path d="M8 5h18v24l-17 1z" fill="#333c4c" />
            <path d="M7 4h18v24l-17 1z" fill="#fbfbf7" />
            <path d="M10 9.500h5M10 11.500h4M10 15.500h11M10 17.500h12M10 19.500h10M10 24.500h5" stroke="#444" />
            <path d="M8 5V2M11 5V2M14 5V2M17 5V2M20 5V2M23 5V2" stroke="#b3a45a" strokeWidth="1.600" />
          </svg>
          homepage.html
        </button>
        <ExplorerWindow />
        <svg className="absolute left-[175px] top-[390px] w-3 h-[21px]" viewBox="0 0 12 21">
          <path
            d="M.500 1v15.500l3.500-3.300 3 6.800 2.500-1-3-6.500h4.700z"
            fill="#fff"
            stroke="#000"
          />
        </svg>
      </main>
      <Taskbar />
    </div>
  );
}
